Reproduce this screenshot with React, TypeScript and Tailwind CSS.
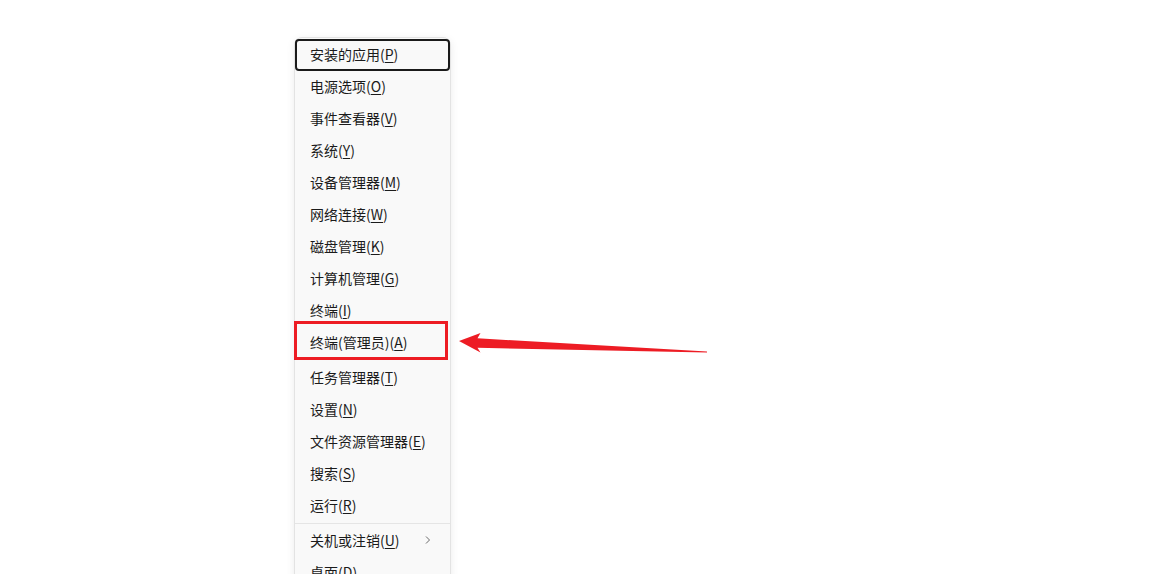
import React from "react";

type Item = { label: string; key: string; suffix?: string; sub?: boolean };

const items: Item[] = [
  { label: "安装的应用", key: "P" },
  { label: "电源选项", key: "O" },
  { label: "事件查看器", key: "V" },
  { label: "系统", key: "Y" },
  { label: "设备管理器", key: "M" },
  { label: "网络连接", key: "W" },
  { label: "磁盘管理", key: "K" },
  { label: "计算机管理", key: "G" },
  { label: "终端", key: "I" },
  { label: "终端(管理员)", key: "A" },
  { label: "任务管理器", key: "T" },
  { label: "设置", key: "N" },
  { label: "文件资源管理器", key: "E" },
  { label: "搜索", key: "S" },
  { label: "运行", key: "R" },
];

function Label({ item }: { item: Item }) {
  return (
    <span>
      {item.label}(<span className="underline underline-offset-2 decoration-1">{item.key}</span>)
    </span>
  );
}

export default function App() {
  return (
    <div
      className="relative h-[574px] w-[1152px] overflow-hidden bg-white pl-[294px] pt-[37px]"
      style={{ fontFamily: '"Noto Sans CJK SC", "Noto Sans", sans-serif' }}
    >
      <div className="w-[157px] h-[600px] rounded-t-[8px] border border-[#e3e3e3] bg-[#f9f9f9] pt-[1px] shadow-[0_2px_8px_rgba(0,0,0,0.08)] text-[14px] text-[#1b1b1b]">
        {items.map((item, i) => {
          const focused = i === 0;
          const marked = i === 9;
          return (
            <div
              key={item.key}
              className={
                "relative flex h-[32px] items-center pl-[15px] pb-[2px] leading-none" +
                (marked ? " mb-[3px]" : "")
              }
            >
              {focused && (
                <div className="pointer-events-none absolute inset-0 rounded-[4px] border-2 border-[#1a1a1a]" />
              )}
              {marked && (
                <div className="pointer-events-none absolute left-[-1px] top-[-6px] h-[39px] w-[154px] border-[3px] border-[#ed1c24]" />
              )}
              <Label item={item} />
            </div>
          );
        })}
        <div className="flex h-[3px] items-center">
          <div className="h-px w-full bg-[#e5e5e5]" />
        </div>
        <div className="flex h-[32px] items-center justify-between pl-[15px] pr-[18px] pb-[2px] leading-none">
          <Label item={{ label: "关机或注销", key: "U" }} />
          <svg width="8" height="10" viewBox="0 0 8 10" className="text-[#6a6a6a]">
            <path d="M2 1.5 L5.5 5 L2 8.5" fill="none" stroke="currentColor" strokeWidth="1" />
          </svg>
        </div>
        <div className="flex h-[32px] items-center pl-[15px] pb-[2px] leading-none">
          <Label item={{ label: "桌面", key: "D" }} />
        </div>
      </div>

      <svg
        className="pointer-events-none absolute left-[455px] top-[325px]"
        width="260"
        height="40"
        viewBox="455 325 260 40"
      >
        <polygon
          points="459,341 480.5,333 477.5,338.3 707,351.6 707,352.6 477.5,347.8 480.5,352.5"
          fill="#ed1c24"
        />
      </svg>
    </div>
  );
}
